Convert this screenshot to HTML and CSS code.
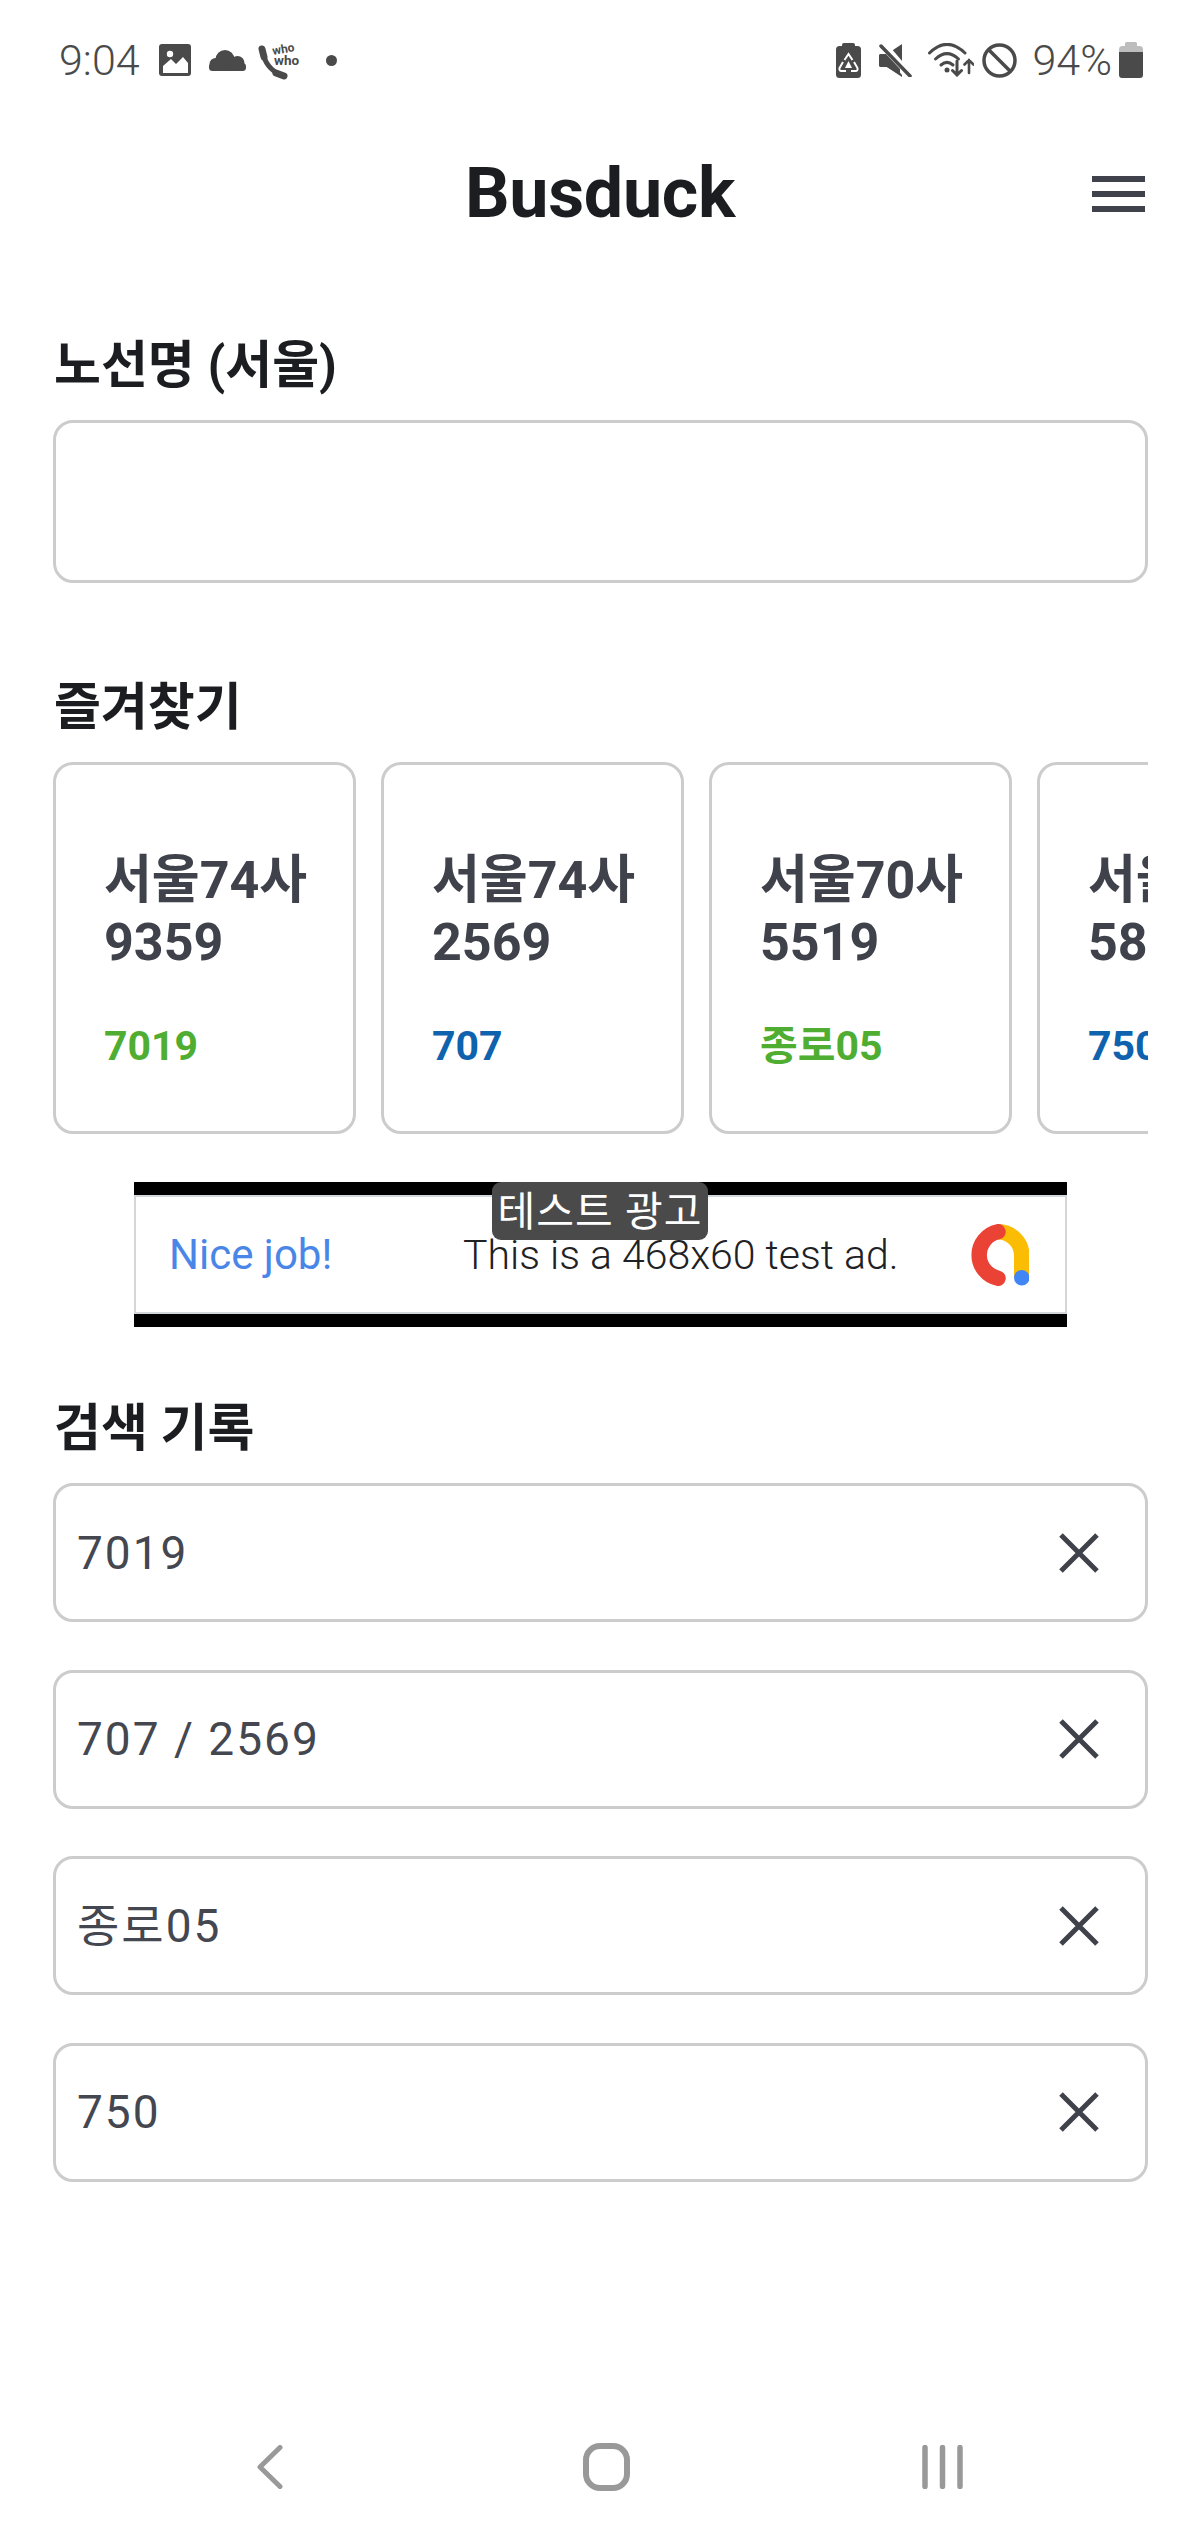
FILE: index.html
```html
<!DOCTYPE html>
<html lang="ko">
<head>
    <meta charset="UTF-8">
    <meta name="viewport" content="width=device-width, initial-scale=1.0">
    <title>Busduck</title>
    <link rel="stylesheet" href="styles.css">
</head>
<body>
<div class="page">
    <div class="status-bar">
        <div class="status-group">
            <span class="status-time">9:04</span>
            <svg class="ic-image" width="32" height="32" viewBox="0 0 32 32"><rect width="32" height="32" rx="3" fill="#4a4a4a"/><circle cx="11" cy="10" r="3.2" fill="#fff"/><path d="M4 29V22L12 15L17 20L24 13L29 19V29Z" fill="#fff"/></svg>
            <svg class="ic-cloud" width="37" height="21" viewBox="0 0 37 21"><g fill="#4a4a4a"><rect y="13" width="37" height="8" rx="3.5"/><circle cx="16" cy="9.500" r="9.500"/><circle cx="28.500" cy="13" r="7"/><circle cx="6.500" cy="14" r="6"/></g></svg>
            <svg class="ic-phone" width="42" height="36" viewBox="0 0 42 36"><path d="M4 10C5 20 12 29 22 33" fill="none" stroke="#4a4a4a" stroke-width="5"/><path d="M3 7L5 15M17 31L25 34" fill="none" stroke="#4a4a4a" stroke-width="7" stroke-linecap="round"/><text class="who-text" x="14" y="13" transform="rotate(-10 14 13)">who</text><text class="who-text who-big" x="15" y="23">who</text></svg>
            <span class="status-dot"></span>
        </div>
        <div class="status-group">
            <svg class="ic-saver" width="25" height="35" viewBox="0 0 25 35"><rect x="6" y="0" width="13" height="6" rx="2" fill="#4a4a4a"/><rect y="3" width="25" height="32" rx="3.500" fill="#4a4a4a"/><g fill="none" stroke="#fff" stroke-width="2"><path d="M8.500 17L12.500 11L16.500 17"/><path d="M18 19L21.500 25Q22 28 19.500 28H15"/><path d="M7 19L3.500 25Q3 28 5.500 28H10"/></g><path d="M12.500 18L16 25H9Z" fill="#fff"/></svg>
            <svg class="ic-mute" width="33" height="33" viewBox="0 0 33 33"><path d="M0 12Q0 10 2 10H8L23 0V33L8 23H2Q0 23 0 21Z" fill="#4a4a4a"/><path d="M1 -2L34 37" stroke="#fff" stroke-width="9"/><path d="M2 2L31 32" stroke="#4a4a4a" stroke-width="3.500" stroke-linecap="round"/><path d="M0 12Q0 10 2 10H7L21 25V31L8 23H2Q0 23 0 21Z" fill="#4a4a4a"/></svg>
            <svg class="ic-wifi" width="46" height="34" viewBox="0 0 46 34"><g fill="none" stroke="#4a4a4a" stroke-width="3" stroke-linecap="round"><path d="M1.500 10C13 -1.500 25 -1.500 37 10"/><path d="M7.500 16C15 9 23 9 30.500 16"/><path d="M13 22C17 18.500 21 18.500 25 22"/><path d="M29 18V32M24.500 27.500L29 32L33.500 27.500"/><path d="M41 30V17M36.500 21.500L41 17L45.500 21.500" stroke-width="2.600"/></g><circle cx="19" cy="27" r="2.500" fill="#4a4a4a"/></svg>
            <svg class="ic-block" width="35" height="35" viewBox="0 0 35 35"><circle cx="17.500" cy="17.500" r="15.500" fill="none" stroke="#4a4a4a" stroke-width="3.500"/><path d="M6.500 6.500L28.500 28.500" stroke="#4a4a4a" stroke-width="3.500"/></svg>
            <span class="status-percent">94%</span>
            <svg class="ic-battery" width="24" height="36" viewBox="0 0 24 36"><rect x="6" width="12" height="6" rx="1.500" fill="#bdbdbd"/><rect y="4" width="24" height="32" rx="3.500" fill="#bdbdbd"/><path d="M0 10H24V32.500Q24 36 20.500 36H3.500Q0 36 0 32.500Z" fill="#4a4a4a"/></svg>
        </div>
    </div>

    <header class="app-header">
        <h1 class="app-title">Busduck</h1>
        <div class="menu-button"><span></span><span></span><span></span></div>
    </header>

    <main class="content">
        <section class="route-search">
            <h2 class="section-label">노선명 (서울)</h2>
            <input class="route-input" type="text">
        </section>

        <section class="favorites">
            <h2 class="section-label">즐겨찾기</h2>
            <div class="favorite-list">
                <div class="favorite-card">
                    <p class="plate">서울74사<br>9359</p>
                    <p class="route route-green">7019</p>
                </div>
                <div class="favorite-card">
                    <p class="plate">서울74사<br>2569</p>
                    <p class="route route-blue">707</p>
                </div>
                <div class="favorite-card">
                    <p class="plate">서울70사<br>5519</p>
                    <p class="route route-green">종로05</p>
                </div>
                <div class="favorite-card">
                    <p class="plate">서울74사<br>5871</p>
                    <p class="route route-blue">750</p>
                </div>
            </div>
        </section>

        <div class="ad-banner">
            <div class="ad-inner">
                <span class="ad-nice">Nice job!</span>
                <span class="ad-text">This is a 468x60 test ad.</span>
                <svg class="ad-logo" width="62" height="62" viewBox="0 0 60 60"><path d="M30 7.500A23 23 0 0 1 53 30.500V52" fill="none" stroke="#fbbc04" stroke-width="15"/><path d="M30 7.500A23 23 0 0 0 30 52.500" fill="none" stroke="#ea4335" stroke-width="15" stroke-linecap="round"/><circle cx="53" cy="52" r="7.500" fill="#4285f4"/></svg>
            </div>
            <span class="ad-label">테스트 광고</span>
        </div>

        <section class="history">
            <h2 class="section-label">검색 기록</h2>
            <div class="history-list">
                <div class="history-row"><span>7019</span><svg class="close-icon" width="40" height="40" viewBox="0 0 40 40"><path d="M2 2L38 38M38 2L2 38"/></svg></div>
                <div class="history-row"><span>707 / 2569</span><svg class="close-icon" width="40" height="40" viewBox="0 0 40 40"><path d="M2 2L38 38M38 2L2 38"/></svg></div>
                <div class="history-row"><span>종로05</span><svg class="close-icon" width="40" height="40" viewBox="0 0 40 40"><path d="M2 2L38 38M38 2L2 38"/></svg></div>
                <div class="history-row"><span>750</span><svg class="close-icon" width="40" height="40" viewBox="0 0 40 40"><path d="M2 2L38 38M38 2L2 38"/></svg></div>
            </div>
        </section>
    </main>

    <nav class="nav-bar">
        <svg class="nav-back" width="26" height="44" viewBox="0 0 26 44"><path d="M23 2.500L3 22L23 41.500"/></svg>
        <svg class="nav-home" width="47" height="48" viewBox="0 0 47 48"><rect x="3" y="3" width="41" height="42" rx="14"/></svg>
        <svg class="nav-recent" width="41" height="44" viewBox="0 0 41 44"><path d="M3 2.500V41.500M20.500 2.500V41.500M38 2.500V41.500"/></svg>
    </nav>
</div>
</body>
</html>
```

FILE: styles.css
```css
* {
    box-sizing: border-box;
}

body {
    margin: 0;
    background-color: #FFFFFF;
    font-family: Roboto, "Noto Sans CJK KR", sans-serif;
}

.page {
    min-height: 2533px;
    display: flex;
    flex-direction: column;
}

/* status bar */
.status-bar {
    height: 120px;
    padding: 0 57px 0 59px;
    display: flex;
    justify-content: space-between;
    align-items: center;
}

.status-group {
    display: flex;
    align-items: center;
}

.status-time,
.status-percent {
    font-size: 43px;
    font-weight: 300;
    color: #4a4a4a;
    line-height: 1;
}

.status-percent {
    margin-left: 16px;
}

.ic-image { margin-left: 19px; }
.ic-cloud { margin-left: 18px; }
.ic-phone { margin-left: 13px; overflow: visible; }
.ic-mute { margin-left: 18px; }
.ic-wifi { margin-left: 16px; }
.ic-block { margin-left: 8px; }
.ic-battery { margin-left: 7px; }

.who-text {
    font-family: Roboto, sans-serif;
    font-size: 12px;
    font-weight: 700;
    fill: #4a4a4a;
}

.who-big {
    font-size: 13.500px;
}

.status-dot {
    width: 11px;
    height: 11px;
    margin-left: 25px;
    border-radius: 50%;
    background-color: #4a4a4a;
}

/* header */
.app-header {
    height: 144px;
    padding: 2px 55px 0 55px;
    display: grid;
    grid-template-columns: 1fr auto 1fr;
    align-items: center;
}

.app-title {
    grid-column: 2;
    margin: 0;
    font-size: 70px;
    font-weight: 700;
    color: #1b1d21;
    letter-spacing: -0.3px;
}

.menu-button {
    grid-column: 3;
    justify-self: end;
    width: 53px;
    margin-top: 2px;
    display: flex;
    flex-direction: column;
    gap: 9px;
}

.menu-button span {
    display: block;
    height: 6px;
    background-color: #3f424b;
}

/* main content */
.content {
    padding: 72px 52px 0 53px;
}

.section-label {
    margin: 0 0 24px 1px;
    font-size: 51px;
    line-height: 60px;
    font-weight: 700;
    color: #1b1d21;
}

.route-input {
    display: block;
    width: 100%;
    height: 163px;
    border: 3px solid #CCCCCC;
    border-radius: 20px;
    background-color: #FFFFFF;
}

.favorites {
    margin-top: 95px;
}

.favorite-list {
    display: flex;
    gap: 25px;
    overflow: hidden;
}

.favorite-card {
    flex: 0 0 303px;
    height: 372px;
    padding: 85px 0 0 48px;
    border: 3px solid #CCCCCC;
    border-radius: 20px;
}

.plate {
    margin: 0;
    font-size: 52px;
    line-height: 62px;
    font-weight: 700;
    color: #3f424b;
    white-space: nowrap;
}

.route {
    margin: 47px 0 0 0;
    font-size: 41px;
    line-height: 50px;
    font-weight: 700;
}

.route-green {
    color: #4fae32;
}

.route-blue {
    color: #0f62ad;
}

/* test ad */
.ad-banner {
    position: relative;
    width: 933px;
    height: 145px;
    margin: 48px 0 0 81px;
    padding: 13px 0;
    background-color: #000000;
}

.ad-inner {
    height: 119px;
    padding: 0 36px 0 33px;
    display: flex;
    align-items: center;
    border: 2px solid #d3d7da;
    background-color: #FFFFFF;
}

.ad-nice {
    width: 294px;
    font-size: 42px;
    color: #4a86e8;
}

.ad-text {
    font-size: 41px;
    font-weight: 300;
    color: #202124;
}

.ad-logo {
    margin-left: auto;
}

.ad-label {
    position: absolute;
    top: 0;
    left: 358px;
    width: 216px;
    height: 58px;
    padding-top: 3px;
    border-radius: 9px;
    background-color: #4a4a4a;
    color: #FFFFFF;
    font-size: 41px;
    line-height: 55px;
    text-align: center;
    letter-spacing: 1px;
}

/* search history */
.history {
    margin-top: 72px;
}

.history-list {
    display: flex;
    flex-direction: column;
    gap: 47.500px;
}

.history-row {
    height: 139px;
    padding: 0 46px 0 21px;
    display: flex;
    justify-content: space-between;
    align-items: center;
    border: 3px solid #CCCCCC;
    border-radius: 20px;
    font-size: 46px;
    line-height: 1;
    letter-spacing: 2px;
    color: #44474f;
}

.close-icon path {
    fill: none;
    stroke: #3f424b;
    stroke-width: 5;
}

/* bottom navigation */
.nav-bar {
    margin-top: auto;
    padding: 0 0 42px 257px;
    display: flex;
    align-items: center;
}

.nav-bar svg * {
    fill: none;
    stroke: #999999;
    stroke-linecap: round;
    stroke-linejoin: round;
}

.nav-back path {
    stroke-width: 5;
}

.nav-home {
    margin-left: 300px;
}

.nav-home rect {
    stroke-width: 6;
}

.nav-recent {
    margin-left: 292px;
}

.nav-recent path {
    stroke-width: 5.500;
}
```
